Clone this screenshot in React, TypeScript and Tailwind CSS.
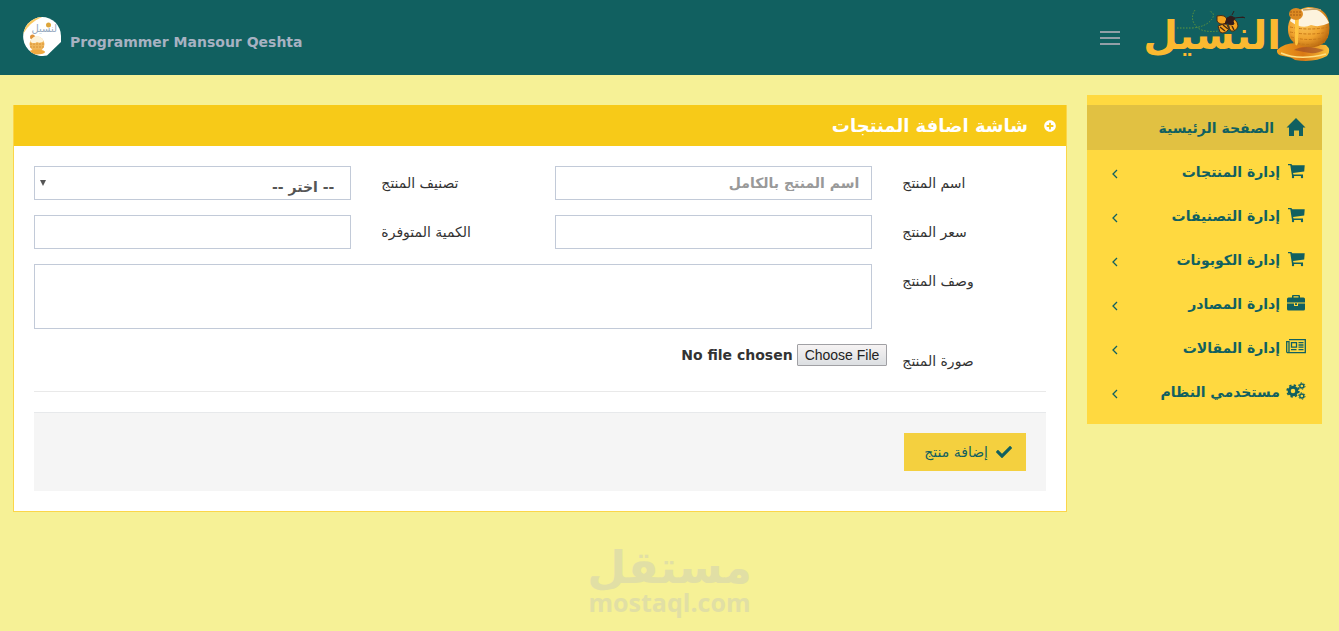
import { useState } from "react";
import type { ReactNode } from "react";
import { FaCheck, FaPlusCircle } from "react-icons/fa";

interface MenuItem {
  label: string;
  icon: ReactNode;
}

const menu: MenuItem[] = [
  { label: "إدارة المنتجات", icon: <CartIcon /> },
  { label: "إدارة التصنيفات", icon: <CartIcon /> },
  { label: "إدارة الكوبونات", icon: <CartIcon /> },
  { label: "إدارة المصادر", icon: <BriefcaseIcon /> },
  { label: "إدارة المقالات", icon: <NewspaperIcon /> },
  { label: "مستخدمي النظام", icon: <CogsIcon /> },
];

const control =
  "block w-full border border-[#c2cad8] bg-white text-sm font-bold text-[#555] placeholder:text-[#999] focus:border-[#93a1bb] focus:outline-none";

export default function App() {
  const [open, setOpen] = useState(true);

  return (
    <div
      dir="rtl"
      className="flex min-h-screen flex-col bg-[#f6f196] font-['DejaVu_Sans','Noto_Sans',sans-serif] text-sm text-[#333]"
    >
      {/* Header */}
      <header className="flex h-[75px] items-center justify-between bg-[#116060] pr-2 pl-[22px]">
        <div className="flex items-center gap-6">
          <a href="#" aria-label="النسيل">
            <Logo />
          </a>
          <button type="button" aria-label="القائمة" onClick={() => setOpen(!open)} className="flex w-5 flex-col gap-1">
            <span className="h-[2px] bg-[#939fa7]" />
            <span className="h-[2px] bg-[#939fa7]" />
            <span className="h-[2px] bg-[#939fa7]" />
          </button>
        </div>
        <a href="#" dir="ltr" className="flex items-center gap-2 pb-[2px]">
          <Avatar />
          <span className="pt-[10px] text-sm font-bold text-[#a7b2c2]">Programmer Mansour Qeshta</span>
        </a>
      </header>

      <div className="flex items-start gap-5 pt-5 pr-[17px] pl-[13px]">
        {open && <Sidebar />}
        <main className="min-w-0 flex-1 pt-[10px]">
          <ProductForm />
        </main>
      </div>

      <Watermark />
    </div>
  );
}

function Sidebar() {
  return (
    <nav className="w-[235px] shrink-0 bg-[#ffd940] py-[10px] text-sm font-bold text-[#116060]">
      <a href="#" className="flex h-[45px] items-center gap-3 bg-[#e1c142] pr-4">
        <HomeIcon />
        <span>الصفحة الرئيسية</span>
      </a>
      {menu.map((item) => (
        <a key={item.label} href="#" className="flex h-11 items-center gap-[6px] pr-4 pl-6 hover:bg-[#e1c142]">
          {item.icon}
          <span className="flex-1">{item.label}</span>
          <svg viewBox="0 0 8 10" className="mt-1 h-[10px] w-2" fill="none" stroke="currentColor" strokeWidth="1.3">
            <path d="M6 1 2 5l4 4" />
          </svg>
        </a>
      ))}
    </nav>
  );
}

function ProductForm() {
  return (
    <section className="border border-t-0 border-[#fbd64a] bg-white">
      <h1 className="flex h-[41px] items-center gap-4 bg-[#f7ca18] pr-[10px] text-lg font-bold text-white">
        <FaPlusCircle className="h-3 w-3" />
        شاشة اضافة المنتجات
      </h1>
      <form className="p-5" onSubmit={(e) => e.preventDefault()}>
        <div className="-mx-[15px] grid grid-cols-12 gap-y-[15px] pb-5">
          <Label id="name">اسم المنتج</Label>
          <div className="col-span-4 px-[15px]">
            <input id="name" type="text" placeholder="اسم المنتج بالكامل" className={`${control} h-[34px] px-3`} />
          </div>
          <Label id="category">تصنيف المنتج</Label>
          <div className="relative col-span-4 px-[15px]">
            <select id="category" className={`${control} h-[34px] appearance-none px-4 pt-[7px]`}>
              <option>-- اختر --</option>
            </select>
            <svg viewBox="0 0 6 6" className="pointer-events-none absolute top-[14px] left-[21px] h-[6px] w-[6px]" fill="#555">
              <path d="M0 0h6L3 6z" />
            </svg>
          </div>

          <Label id="price">سعر المنتج</Label>
          <div className="col-span-4 px-[15px]">
            <input id="price" type="text" className={`${control} h-[34px] px-3`} />
          </div>
          <Label id="quantity">الكمية المتوفرة</Label>
          <div className="col-span-4 px-[15px]">
            <input id="quantity" type="text" className={`${control} h-[34px] px-3`} />
          </div>

          <Label id="description">وصف المنتج</Label>
          <div className="col-span-10 px-[15px]">
            <textarea id="description" className={`${control} h-[65px] resize-none px-3 py-[6px]`} />
          </div>

          <Label id="image">صورة المنتج</Label>
          <div className="col-span-10">
            <input
              id="image"
              type="file"
              className="block h-[22px] text-sm font-bold text-[#333] file:me-1 file:h-[22px] file:rounded-[1px] file:border file:border-solid file:border-[#a0a0a4] file:bg-linear-to-b file:from-[#f6f3f3] file:to-[#dcdfe2] file:px-[7px] file:font-['Liberation_Sans',sans-serif] file:text-sm file:font-normal file:text-[#222]"
            />
          </div>
        </div>

        <hr className="mb-5 border-[#e9e9e9]" />

        <div className="border-t border-[#e7e9eb] bg-[#f5f5f5] p-5">
          <button type="submit" className="flex h-[38px] items-center gap-2 bg-[#f4d03f] px-[14px] pl-5 text-sm text-[#116060]">
            <FaCheck className="h-4 w-4" />
            إضافة منتج
          </button>
        </div>
      </form>
    </section>
  );
}

function Label({ id, children }: { id: string; children: ReactNode }) {
  return (
    <label htmlFor={id} className="col-span-2 px-[15px] pt-[7px] text-left">
      {children}
    </label>
  );
}

function Watermark() {
  return (
    <footer className="flex flex-col items-center pt-8 text-[#e1dfa5]">
      <span className="text-[45px] leading-[48px] font-bold">مستقل</span>
      <span dir="ltr" className="font-['Open_Sans',sans-serif] text-[25px] leading-5 font-bold">
        mostaql.com
      </span>
    </footer>
  );
}

function HomeIcon() {
  return (
    <svg viewBox="0 0 20 20" className="h-5 w-5" fill="currentColor">
      <path d="M10 0 19.500 9.500H17V18h-4v-5.500H8V18H3V9.500H.5z" />
    </svg>
  );
}

function CartIcon() {
  return (
    <svg viewBox="0 0 20 20" className="h-5 w-5" fill="currentColor">
      <path d="M2 2h3.300l1 1.200h12.400l-.5 6.300L7 11l.5 1.500H17V14H6L4.300 3.300H2z" />
      <circle cx="7" cy="15" r="1.200" />
      <circle cx="16" cy="15" r="1.200" />
    </svg>
  );
}

function BriefcaseIcon() {
  return (
    <svg viewBox="0 0 20 20" className="h-5 w-5" fill="currentColor">
      <path d="M6 3.500V2Q6 1 7 1h6q1 0 1 1v1.500h3.500Q19 3.500 19 5v3.500H1V5Q1 3.500 2.500 3.500zM7.500 3.500h5V2.300h-5zM1 9.500h7V12h4V9.500h7V15q0 1.500-1.500 1.500h-15Q1 16.500 1 15zM9 9.300h2V11H9z" />
    </svg>
  );
}

function NewspaperIcon() {
  return (
    <svg viewBox="0 0 20 20" className="h-5 w-5" fill="none" stroke="currentColor" strokeWidth="1.300">
      <path d="M3 1.700h16.300v13H2Q.7 14.700.7 13.200V3.700H3v9.500Q3 14.700 2 14.700" />
      <path d="M5.500 4.700h5v4.500h-5zM12.500 4.700h5M12.500 7h5M12.500 9.200h5M5 11.700h5.500M12.500 11.700h5" />
    </svg>
  );
}

function CogsIcon() {
  return (
    <svg viewBox="0 0 20 20" className="h-5 w-5" fill="none" stroke="currentColor">
      <circle cx="7" cy="9" r="3.800" strokeWidth="3" />
      <circle cx="7" cy="9" r="5.800" strokeWidth="1.800" strokeDasharray="2.300 2.255" />
      <circle cx="15.800" cy="4" r="2" strokeWidth="1.400" />
      <circle cx="15.800" cy="4" r="3.200" strokeWidth="1" strokeDasharray="1.500 1.851" />
      <circle cx="15.800" cy="14" r="2" strokeWidth="1.400" />
      <circle cx="15.800" cy="14" r="3.200" strokeWidth="1" strokeDasharray="1.500 1.851" />
    </svg>
  );
}

function Avatar() {
  return (
    <svg viewBox="0 0 40 40" className="h-10 w-10">
      <clipPath id="avatar">
        <path d="M20 0a19 19 0 0 1 19 19v6L25 38.500A19.500 19.500 0 1 1 20 0z" />
      </clipPath>
      <g clipPath="url(#avatar)">
        <path d="M0 0h40v40H0z" fill="#fff" />
        <path d="M0 0h20Q8 5 1 17H0z" fill="#fbc961" />
        <text x="35" y="15" direction="rtl" fontSize="10" fill="#96a9bf">
          لنسيل
        </text>
        <circle cx="26.500" cy="8" r="2.500" fill="#dda53a" />
        <circle cx="10.500" cy="20" r="2.500" fill="#e0933b" />
        <circle cx="15" cy="27" r="7.500" fill="#efb65b" />
        <path d="M8 24q7-10 14 0-4 3-7 1-4 3-7-1" fill="#fdf3dc" />
        <path d="M8 27h14M8 30h14" stroke="#d58b2c" strokeWidth=".8" strokeDasharray="2 1" />
        <ellipse cx="15" cy="35" rx="8" ry="2.500" fill="#f2a93f" />
      </g>
    </svg>
  );
}

function Logo() {
  return (
    <svg viewBox="0 5 187 64" className="h-16 w-[187px] overflow-visible">
      <defs>
        <radialGradient id="jar" cx=".4" cy=".4" r=".65">
          <stop offset="0" stopColor="#fbc75b" />
          <stop offset=".6" stopColor="#f0a32e" />
          <stop offset="1" stopColor="#b9680f" />
        </radialGradient>
        <linearGradient id="honey" x1="0" x2="1">
          <stop offset="0" stopColor="#f2a01e" />
          <stop offset=".5" stopColor="#d97914" />
          <stop offset="1" stopColor="#fbc33b" />
        </linearGradient>
      </defs>
      <text x="137" y="48" direction="rtl" fontSize="40" fontWeight="bold" fill="#fbb930">
        النسيل
      </text>

      {/* Flight path and bee */}
      <g transform="translate(0 4)">
        <path d="M33 23h15q14-1 20-9 4-6-3-8M51 5q-6 9 2 17 6 6 22 4" fill="none" stroke="#5f963c" strokeDasharray="1.500 1.500" />
        <path d="M73 11q9-2 10 4l-1 4q-7 1-9-3zM74 21l8-3 3 6q-5 6-9 3zM86 14q7-1 8 7-2 6-7 5-4-5-1-12z" fill="#f5a31f" stroke="#4a2b14" />
        <path d="m83 13 4-2 4 2-2 3 1 3-3 1-4-2-2 1zM88 10l2-4M91 13l8-1 2 1" fill="#321c1c" stroke="#321c1c" />
        <path d="m76 22 5 4m-2-6 5 4m4-3 2 4" stroke="#4a2b14" strokeWidth="1.500" />
      </g>

      {/* Honey jar */}
      <g transform="translate(-1 -4)">
        <path d="M134 53q8-8 22-7l27 2q6 5 1 11-13 7-32 4-3-3-12-4-7-1-6-6z" fill="url(#honey)" />
        <path d="M145 30q2-17 20-20 18 0 21 15 2 13-4 20-10 9-26 3-12-4-11-18z" fill="url(#jar)" />
        <path d="M147 24Q152 12 166 11q14 1 20 15-10 5-18 2-9 5-21-4z" fill="#fdf3dd" />
        <path d="M147 30q19 4 39 0M147 35q19 4 39 0M148 40q18 5 37 0M150 45q15 5 32 0" fill="none" stroke="#c87918" strokeDasharray="3 1.500" />
        <path d="M152 18h4l-1 28q-2 5-3 0z" fill="#ffc43f" />
        <ellipse cx="153" cy="17" rx="7" ry="6" fill="#dc8a22" />
        <path d="M147 15h12m-12 3h12" stroke="#a85c12" strokeDasharray="2 1" />
        <path d="m160 13 12-1 6 1" fill="none" stroke="#c4a16a" strokeWidth="1.500" />
        <path d="M151 53q10-6 30 0-8 5-20 2" fill="#9d4b28" opacity=".65" />
        <path d="M138 56q18 8 45 1" fill="none" stroke="#ffe083" strokeWidth="1.500" />
      </g>
    </svg>
  );
}
